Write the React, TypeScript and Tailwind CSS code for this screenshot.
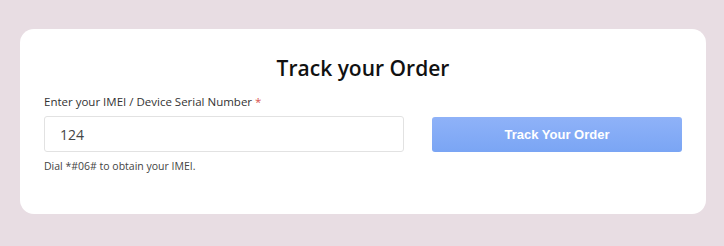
import React from "react";

export default function App() {
  return (
    <div className="w-[724px] h-[246px] bg-[#e8dde3] pt-[29px] pl-[20px]" style={{ fontFamily: '"Open Sans", "Noto Sans", sans-serif' }}>
      <div className="w-[686px] h-[185px] bg-white rounded-[14px] pt-[14px] px-[24px]">
        <h1 className="text-center text-[21px] leading-[50px] font-semibold text-[#111]">Track your Order</h1>
        <div className="mt-[1px] text-[11.5px] leading-[16px] text-[#333]">
          Enter your IMEI / Device Serial Number <span className="text-[#d9534f]">*</span>
        </div>
        <div className="mt-[6px] flex items-start gap-[28px]">
          <div className="flex-1">
            <div className="h-[36px] border border-[#e2e2e2] rounded-[3px] flex items-center pl-[15px] text-[14px] text-[#444]">124</div>
            <div className="mt-[7px] text-[10.5px] leading-[14px] text-[#444]">Dial *#06# to obtain your IMEI.</div>
          </div>
          <button className="w-[250px] h-[35px] mt-[1px] rounded-[3px] bg-gradient-to-b from-[#8fb2f8] to-[#7aa5f4] text-white font-bold text-[13px]" style={{ fontFamily: '"Liberation Sans", Arial, sans-serif' }}>
            Track Your Order
          </button>
        </div>
      </div>
    </div>
  );
}
